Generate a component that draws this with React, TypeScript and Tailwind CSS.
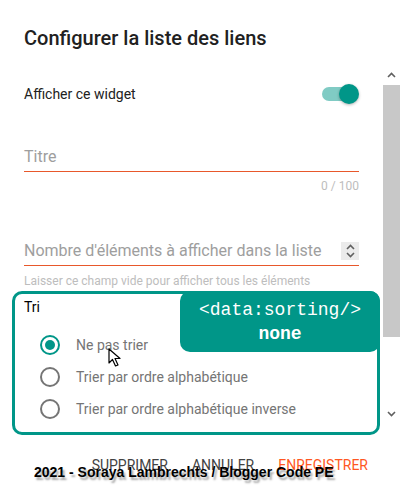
import React from 'react';

const options = [
  { label: 'Ne pas trier', checked: true },
  { label: 'Trier par ordre alphabétique', checked: false },
  { label: 'Trier par ordre alphabétique inverse', checked: false },
];

const Radio = ({ checked }: { checked: boolean }) => (
  <span
    className={`flex h-5 w-5 items-center justify-center rounded-full border-2 ${
      checked ? 'border-[#009688]' : 'border-[#757575]'
    }`}
  >
    {checked && <span className="h-[10px] w-[10px] rounded-full bg-[#009688]" />}
  </span>
);

const Chevron = ({ up }: { up?: boolean }) => (
  <svg width="9" height="6" viewBox="0 0 9 6" className="text-[#606060]">
    <path
      d={up ? 'M1 5 L4.5 1.5 L8 5' : 'M1 1 L4.5 4.5 L8 1'}
      fill="none"
      stroke="currentColor"
      strokeWidth="1.6"
    />
  </svg>
);

const App = () => {
  return (
    <div className="relative h-[500px] w-[400px] overflow-hidden bg-white font-['Roboto',sans-serif] text-[#212121]">
      <h1 className="pl-6 pt-6 text-[20px] font-medium leading-7">Configurer la liste des liens</h1>

      <div className="mt-3 flex">
        <div className="flex-1 pl-6 pr-6">
          <div className="flex h-[60px] items-center justify-between">
            <span className="text-[14px]">Afficher ce widget</span>
            <div className="relative mr-px flex h-5 w-9 items-center">
              <div className="h-[14px] w-[34px] rounded-full bg-[#80cbc4]" />
              <div className="absolute right-[-1px] h-5 w-5 rounded-full bg-[#009688] shadow-[0_1px_3px_rgba(0,0,0,0.3)]" />
            </div>
          </div>

          <div className="mt-[21px] border-b border-[#e8582b] pb-[2px] text-[16px] leading-6 text-[#9e9e9e]">Titre</div>
          <div className="mt-[6px] text-right text-[12px] leading-4 text-[#bdbdbd]">0 / 100</div>

          <div className="mt-[45px] flex items-center justify-between border-b border-[#e8582b] pb-[2px]">
            <span className="text-[16px] leading-6 text-[#9e9e9e]">Nombre d'éléments à afficher dans la liste</span>
            <span className="flex h-[18px] w-[18px] flex-col items-center justify-center gap-[2px] bg-[#ebebeb]">
              <Chevron up />
              <Chevron />
            </span>
          </div>
          <div className="mt-[7px] text-[12px] leading-4 text-[#bdbdbd]">
            Laisser ce champ vide pour afficher tous les éléments
          </div>

          <div className="relative -ml-3 mr-[-21px] mt-[2px] rounded-[10px] border-[3px] border-[#009688] pb-[7px] pl-[9px] pt-[3px]">
            <div className="text-[14px] leading-5 text-black">Tri</div>
            <div className="mt-3">
              {options.map((o) => (
                <div key={o.label} className="flex h-8 items-center gap-4 pl-4">
                  <Radio checked={o.checked} />
                  <span className="text-[14px] text-[#757575]">{o.label}</span>
                </div>
              ))}
            </div>

            <div className="absolute right-[-3px] top-[-3px] flex h-[61px] w-[200px] flex-col items-center justify-center rounded-[10px] bg-[#009688] font-['Liberation_Mono',monospace] text-[18px] leading-6 text-white">
              <span>&lt;data:sorting/&gt;</span>
              <span className="font-bold">none</span>
            </div>

            <svg className="absolute left-[93px] top-[54px]" width="14" height="20" viewBox="0 0 14 20">
              <path d="M1 1 L1 15 L4.5 11.5 L7.5 18 L10 17 L7 10.5 L12 10.5 Z" fill="white" stroke="black" strokeWidth="1.2" strokeLinejoin="round" />
            </svg>
          </div>
        </div>

        <div className="flex h-[361px] w-[17px] flex-col items-center">
          <div className="flex h-[21px] items-center">
            <Chevron up />
          </div>
          <div className="h-[252px] w-full bg-[#c8c8c8]" />
          <div className="flex flex-1 items-end pb-[8px]">
            <Chevron />
          </div>
        </div>
      </div>

      <div className="mt-[20px] flex justify-end gap-6 pr-8 text-[14px] leading-5">
        <span className="text-[#424242]">SUPPRIMER</span>
        <span className="text-[#424242]">ANNULER</span>
        <span className="text-[#ff5722]">ENREGISTRER</span>
      </div>

      <div className="absolute left-[34px] top-[462px] font-['Liberation_Sans',sans-serif] text-[14px] font-bold leading-5 text-black [text-shadow:2px_3px_2px_rgba(0,0,0,0.35)]">
        2021 - Soraya Lambrechts / Blogger Code PE
      </div>
    </div>
  );
};

export default App;
